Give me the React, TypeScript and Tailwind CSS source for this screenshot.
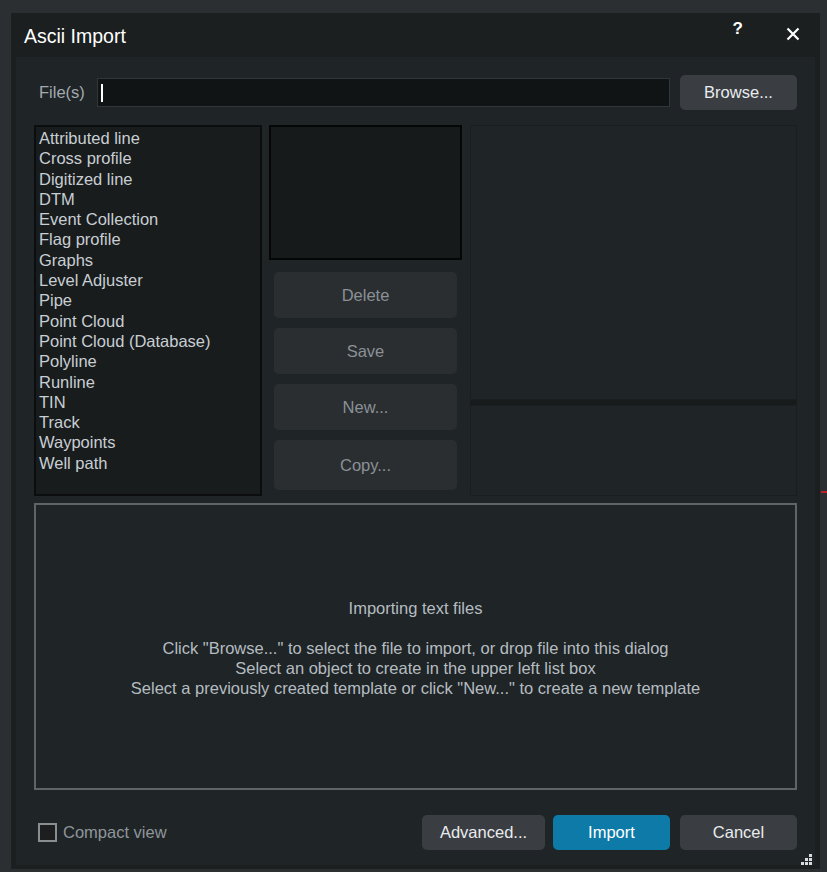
const items = [
  "Attributed line",
  "Cross profile",
  "Digitized line",
  "DTM",
  "Event Collection",
  "Flag profile",
  "Graphs",
  "Level Adjuster",
  "Pipe",
  "Point Cloud",
  "Point Cloud (Database)",
  "Polyline",
  "Runline",
  "TIN",
  "Track",
  "Waypoints",
  "Well path",
]

function SideButton({ label, tall }: { label: string; tall?: boolean }) {
  return (
    <div
      className={`flex items-center justify-center rounded-[5px] bg-[#2a2e31] text-[16.5px] text-[#8b9196] ${
        tall ? "h-[50px]" : "h-[46px]"
      }`}
    >
      {label}
    </div>
  )
}

function Grip() {
  // little dotted resize corner
  const dots = [
    [8, 0],
    [4, 4],
    [8, 4],
    [0, 8],
    [4, 8],
    [8, 8],
  ]
  return (
    <svg width="11" height="11" viewBox="0 0 11 11">
      {dots.map(([x, y], i) => (
        <rect key={i} x={x} y={y} width="3" height="3" fill="#d9dcde" />
      ))}
    </svg>
  )
}

export default function App() {
  return (
    <div
      className="w-[827px] h-[872px] bg-[#2c2f31] pt-[13px] pl-[11px] relative overflow-hidden"
      style={{ fontFamily: '"Liberation Sans", Arial, sans-serif' }}
    >
      {/* red tick on the right edge */}
      <div className="absolute right-0 top-[491px] w-[6px] h-[2px] bg-[#c0202a]" />

      <div className="w-[809px] h-[856px] bg-[#1b1f20] flex flex-col">
        {/* title bar */}
        <div className="h-[44px] flex items-center pl-[13px] pr-[20px] shrink-0">
          <span className="text-[19.5px] text-white mt-[4px]">Ascii Import</span>
          <span className="ml-auto text-[17px] font-bold text-white -mt-[13px]">?</span>
          <svg className="ml-[43px] -mt-[2px]" width="14" height="14" viewBox="0 0 14 14">
            <path d="M1.5 1.5 L12.5 12.5 M12.5 1.5 L1.5 12.5" stroke="#ffffff" strokeWidth="2.2" />
          </svg>
        </div>

        {/* body */}
        <div className="flex-1 mx-[5px] mb-[4px] bg-[#1f2426] px-[18px] flex flex-col">
          {/* file row */}
          <div className="mt-[18px] h-[35px] flex items-center">
            <span className="pl-[5px] w-[63px] text-[16.5px] text-[#a3aab0]">File(s)</span>
            <div className="w-[573px] h-[29px] bg-[#111415] border border-[#30363a] flex items-center pl-[3px]">
              <div className="w-[2px] h-[18px] bg-white" />
            </div>
            <div className="ml-[10px] w-[117px] h-[35px] rounded-[5px] bg-[#3a3e42] flex items-center justify-center text-[16.5px] text-[#e9ecee]">
              Browse...
            </div>
          </div>

          {/* main row */}
          <div className="mt-[15px] h-[371px] flex">
            <div className="w-[228px] bg-[#181c1d] border-2 border-[#0b0d0e] pl-[3px] pt-[1px]">
              {items.map((it) => (
                <div key={it} className="h-[20.3px] leading-[20.3px] text-[16.5px] text-[#c8ced3]">
                  {it}
                </div>
              ))}
            </div>

            <div className="ml-[7px] w-[193px] flex flex-col">
              <div className="h-[135px] bg-[#161a1b] border-2 border-[#050606]" />
              <div className="mt-[12px] px-[5px] flex flex-col gap-[10px]">
                <SideButton label="Delete" />
                <SideButton label="Save" />
                <SideButton label="New..." />
                <SideButton label="Copy..." tall />
              </div>
            </div>

            <div className="ml-[8px] flex-1 flex flex-col">
              <div className="h-[275px] bg-[#1f2426] border border-[#1a1e20]" />
              <div className="h-[5px] bg-[#171b1c]" />
              <div className="flex-1 bg-[#1f2426] border border-[#1a1e20]" />
            </div>
          </div>

          {/* info box */}
          <div className="mt-[7px] h-[287px] border-2 border-[#5f6466] flex flex-col items-center pt-[93px] text-[16.5px] text-[#b5bcc1] leading-[20px]">
            <div>Importing text files</div>
            <div className="mt-[20px]">Click "Browse..." to select the file to import, or drop file into this dialog</div>
            <div>Select an object to create in the upper left list box</div>
            <div>Select a previously created template or click "New..." to create a new template</div>
          </div>

          {/* bottom row */}
          <div className="mt-[25px] h-[35px] flex items-center">
            <div className="ml-[4px] w-[19px] h-[19px] border-2 border-[#8a8e90] bg-[#1c1e1f]" />
            <span className="ml-[6px] text-[16.5px] text-[#8f969b]">Compact view</span>
            <div className="ml-auto w-[123px] h-[35px] rounded-[5px] bg-[#3a3e42] flex items-center justify-center text-[16.5px] text-[#e9ecee]">
              Advanced...
            </div>
            <div className="ml-[8px] w-[117px] h-[35px] rounded-[5px] bg-[#0e7aa8] flex items-center justify-center text-[16.5px] text-white">
              Import
            </div>
            <div className="ml-[10px] w-[117px] h-[35px] rounded-[5px] bg-[#3a3e42] flex items-center justify-center text-[16.5px] text-[#e9ecee]">
              Cancel
            </div>
          </div>
          <div className="flex justify-end mt-[4px] -mr-[15px]">
            <Grip />
          </div>
        </div>
      </div>
    </div>
  )
}
